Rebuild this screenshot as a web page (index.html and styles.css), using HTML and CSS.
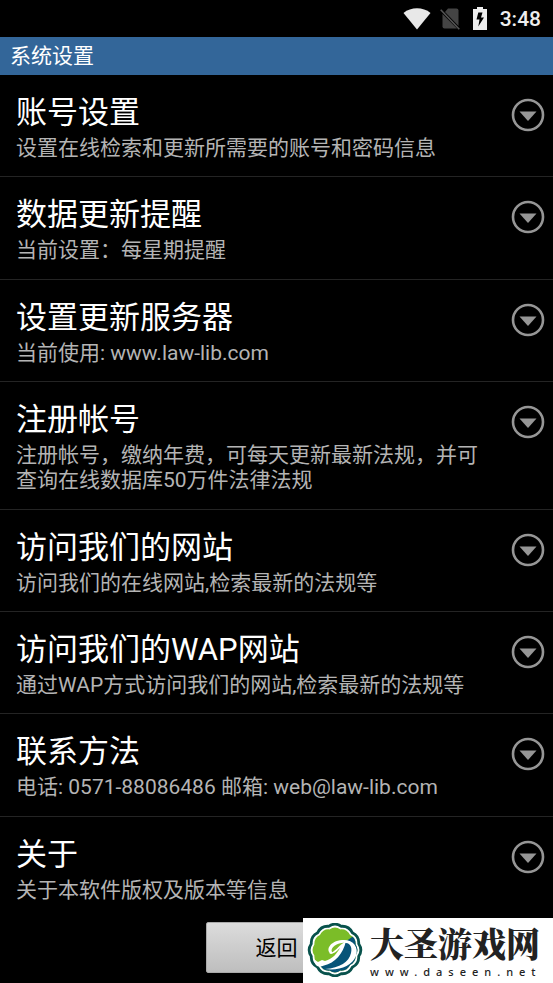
FILE: index.html
```html
<!DOCTYPE html>
<html lang="zh-CN">
<head>
<meta charset="utf-8">
<meta name="viewport" content="width=device-width, initial-scale=1">
<title>系统设置</title>
<link rel="stylesheet" href="styles.css">
</head>
<body>
<svg class="defs" aria-hidden="true">
  <symbol id="chevron" viewBox="0 0 34 34">
    <circle cx="17" cy="17" r="15" fill="none" stroke="#969696" stroke-width="2.6"/>
    <path d="M8.5 13.5h17L17 23z" fill="#969696"/>
  </symbol>
</svg>

<div class="status">
  <svg class="wifi" viewBox="0 0 28 22" aria-hidden="true"><path d="M14 21.5 0.5 5C8-1.2 20-1.2 27.500 5z" fill="#e8e8e8"/></svg>
  <svg class="sim" viewBox="0 0 20 22" aria-hidden="true">
    <path d="M8 0.500h8.500a2 2 0 0 1 2 2V18L5 4z" fill="#444"/>
    <path d="M2.500 6 17 20.500H4.500a2 2 0 0 1-2-2z" fill="#444"/>
    <path d="M0.700 1.700 19.300 21.300" stroke="#555" stroke-width="1.600"/>
  </svg>
  <svg class="battery" viewBox="0 0 14 23" aria-hidden="true">
    <path d="M4 0h6v2h4v21H0V2h4z" fill="#eee"/>
    <path d="M9.500 5.500H5.300L3.500 12.500h3L5.300 19.500 11 10.500H8z" fill="#000"/>
  </svg>
  <time class="clock">3:48</time>
</div>

<h1 class="title">系统设置</h1>

<ul class="list">
  <li class="row"><button class="item" type="button"><span class="text"><span class="name">账号设置</span><span class="desc">设置在线检索和更新所需要的账号和密码信息</span></span><svg class="arrow" aria-hidden="true"><use href="#chevron"/></svg></button></li>
  <li class="row"><button class="item" type="button"><span class="text"><span class="name">数据更新提醒</span><span class="desc">当前设置：每星期提醒</span></span><svg class="arrow" aria-hidden="true"><use href="#chevron"/></svg></button></li>
  <li class="row"><button class="item" type="button"><span class="text"><span class="name">设置更新服务器</span><span class="desc">当前使用: www.law-lib.com</span></span><svg class="arrow" aria-hidden="true"><use href="#chevron"/></svg></button></li>
  <li class="row"><button class="item" type="button"><span class="text"><span class="name">注册帐号</span><span class="desc">注册帐号，缴纳年费，可每天更新最新法规，并可查询在线数据库50万件法律法规</span></span><svg class="arrow" aria-hidden="true"><use href="#chevron"/></svg></button></li>
  <li class="row"><button class="item" type="button"><span class="text"><span class="name">访问我们的网站</span><span class="desc">访问我们的在线网站,检索最新的法规等</span></span><svg class="arrow" aria-hidden="true"><use href="#chevron"/></svg></button></li>
  <li class="row"><button class="item" type="button"><span class="text"><span class="name">访问我们的WAP网站</span><span class="desc">通过WAP方式访问我们的网站,检索最新的法规等</span></span><svg class="arrow" aria-hidden="true"><use href="#chevron"/></svg></button></li>
  <li class="row"><button class="item" type="button"><span class="text"><span class="name">联系方法</span><span class="desc">电话: 0571-88086486 邮箱: web@law-lib.com</span></span><svg class="arrow" aria-hidden="true"><use href="#chevron"/></svg></button></li>
  <li class="row"><button class="item" type="button"><span class="text"><span class="name">关于</span><span class="desc">关于本软件版权及版本等信息</span></span><svg class="arrow" aria-hidden="true"><use href="#chevron"/></svg></button></li>
</ul>

<div class="footer"><button class="back" type="button">返回</button></div>

<div class="badge">
  <svg class="logo" viewBox="0 0 56 54" aria-hidden="true">
    <defs>
      <path id="seal" d="M51.7 20.7Q56 27 51.7 33.3Q52.2 41 45.3 44.3Q42 51.2 34.3 50.7Q28 55 21.7 50.7Q14 51.2 10.7 44.3Q3.800 41 4.300 33.3Q0 27 4.300 20.7Q3.800 13 10.7 9.700Q14 2.800 21.7 3.300Q28-1 34.3 3.300Q42 2.800 45.3 9.700Q52.2 13 51.7 20.7z"/>
      <clipPath id="inner"><use href="#seal" transform="translate(3.640 3.510) scale(.87)"/></clipPath>
    </defs>
    <use href="#seal" fill="#fff" stroke="#08524c" stroke-width="2.800" stroke-linejoin="round"/>
    <g clip-path="url(#inner)">
      <path d="M0 0h56v54H0z" fill="#7bbd28"/>
      <path d="M56 8 45 14 38 19C34 31 25 40 10 41L8 54h48z" fill="#075478"/>
    </g>
    <path d="M24 31C18 27 23 18 35 17 46 16 52 24 49 33 45 43 32 48 18 46 33 45 42 39 44 30 46 22 41 19 35 20 27 21 22 27 26 30z" fill="#fff"/>
    <path d="M39 18C36 31 28 40 17 42.500 14 44 11 44 9 42L7.500 39 8 37 11 39 15 37 18 38C26 36 30 30 33 25 30 28 27 31 22 31 28 29 31 23 39 18z" fill="#fff"/>
  </svg>
  <div class="brand"><span class="brand-name">大圣游戏网</span><span class="brand-url">www.daseen.net</span></div>
</div>
</body>
</html>
```
FILE: styles.css
```css
* {
  box-sizing: border-box;
}

body {
  display: flex;
  flex-direction: column;
  min-height: 100vh;
  margin: 0;
  background: #000;
  color: #fff;
  font-family: Roboto, "Noto Sans CJK SC", sans-serif;
}

button {
  font-family: inherit;
  cursor: pointer;
}

.defs {
  position: absolute;
  width: 0;
  height: 0;
}

.status {
  display: flex;
  align-items: center;
  justify-content: flex-end;
  height: 37px;
  padding: 0 12px;
}

.wifi {
  width: 28px;
  height: 22px;
  margin-right: 9px;
}

.sim {
  width: 20px;
  height: 22px;
  margin-right: 13px;
}

.battery {
  width: 14px;
  height: 23px;
  margin-right: 13px;
}

.clock {
  color: #eee;
  font-size: 21px;
  font-weight: 500;
  line-height: 38px;
}

.title {
  margin: 0;
  padding: 1px 10px 0;
  background: #336699;
  font-size: 21px;
  font-weight: 400;
  line-height: 37px;
}

.list {
  display: flex;
  flex: 1 0 auto;
  flex-direction: column;
  margin: 0;
  padding: 0;
  list-style: none;
}

.row {
  display: flex;
  flex: 1 0 auto;
  border-bottom: 1px solid #242424;
}

.row:last-child {
  border-bottom-color: transparent;
}

.item {
  display: flex;
  flex: 1;
  align-items: flex-start;
  justify-content: space-between;
  gap: 16px;
  padding: 19px 8px 15px 16px;
  border: 0;
  background: none;
  color: inherit;
  text-align: left;
}

.text {
  display: flex;
  flex: 1;
  flex-direction: column;
  gap: 4px;
}

.name {
  font-size: 31px;
  line-height: 38px;
}

.desc {
  color: #b4b4b4;
  font-size: 21px;
  line-height: 25px;
}

.arrow {
  flex: none;
  width: 34px;
  height: 34px;
  margin-top: 4px;
}

.footer {
  display: flex;
  justify-content: center;
  padding: 3px 0 10px;
}

.back {
  width: 142px;
  height: 51px;
  padding: 0 0 4px;
  border: 1px solid #aaa;
  border-radius: 2px;
  background: linear-gradient(#dcdcdc, #bebebe);
  color: #000;
  font-size: 21px;
}

.badge {
  position: fixed;
  right: 0;
  bottom: 0;
  display: flex;
  gap: 7px;
  width: 250px;
  height: 65px;
  padding: 5px 4px;
  background: #fff;
  color: #222;
}

.logo {
  flex: none;
  width: 56px;
  height: 54px;
}

.brand {
  display: flex;
  flex-direction: column;
  gap: 3px;
  white-space: nowrap;
}

.brand-name {
  font-family: "Noto Serif CJK SC", "Noto Sans CJK SC", serif;
  font-size: 34px;
  font-weight: 900;
  line-height: 40px;
}

.brand-url {
  font-family: "Noto Sans", sans-serif;
  font-size: 11px;
  font-weight: 500;
  letter-spacing: 6px;
  line-height: 12px;
}
```
